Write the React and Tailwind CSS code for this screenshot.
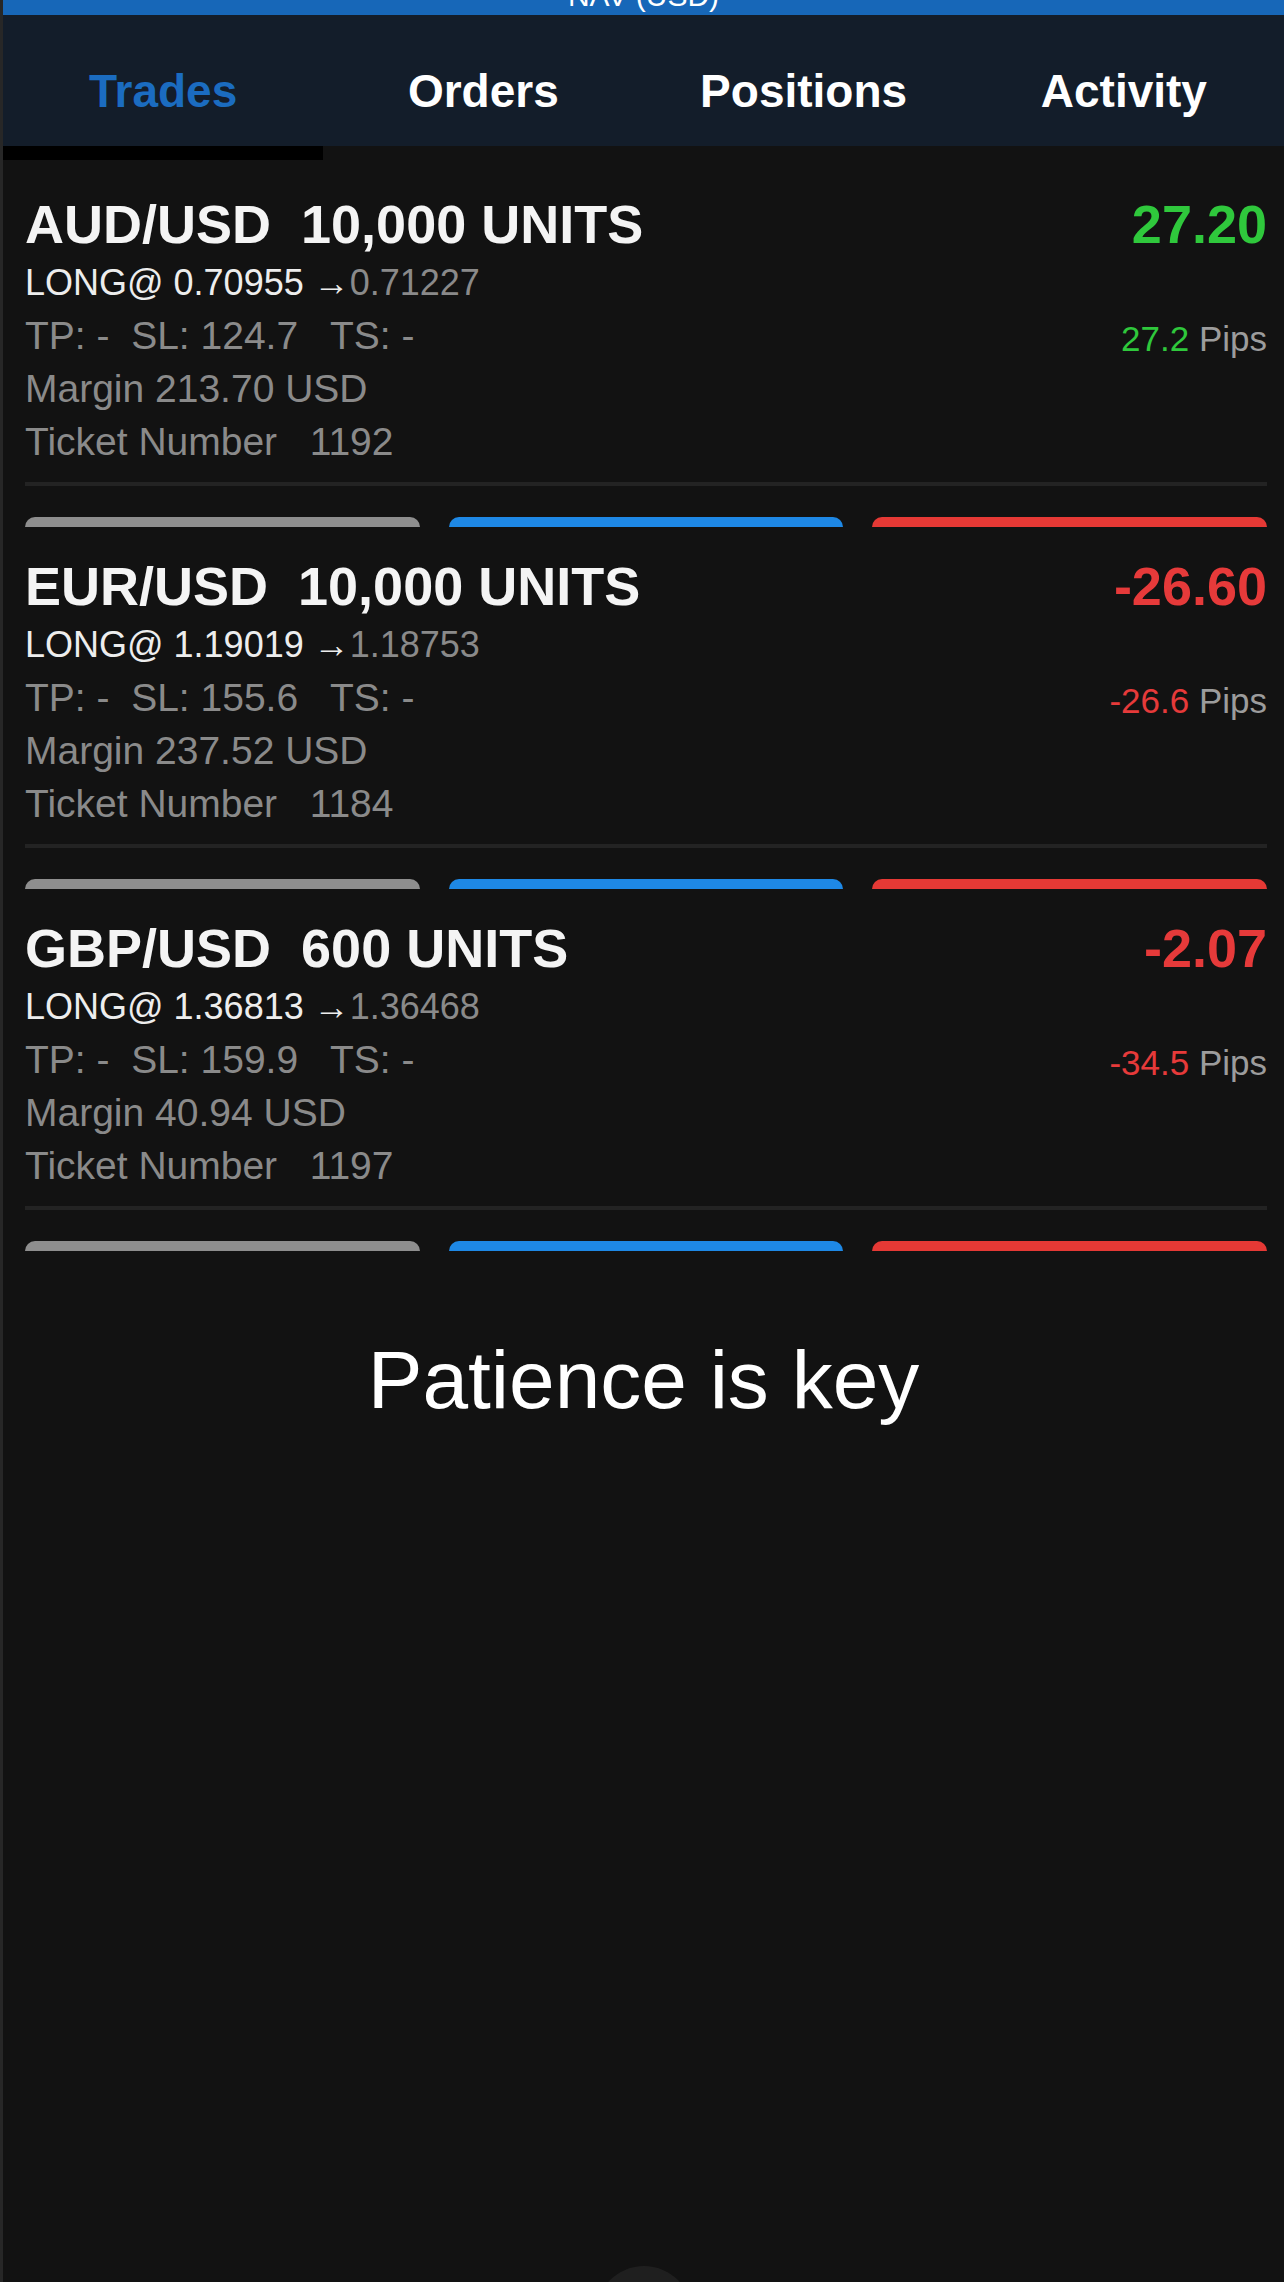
import React from 'react';

const tabs = ['Trades', 'Orders', 'Positions', 'Activity'];

const trades = [
    {
        pair: 'AUD/USD',
        units: '10,000 UNITS',
        open: '0.70955',
        current: '0.71227',
        sl: '124.7',
        margin: '213.70',
        ticket: '1192',
        pl: '27.20',
        pips: '27.2',
        up: true,
    },
    {
        pair: 'EUR/USD',
        units: '10,000 UNITS',
        open: '1.19019',
        current: '1.18753',
        sl: '155.6',
        margin: '237.52',
        ticket: '1184',
        pl: '-26.60',
        pips: '-26.6',
        up: false,
    },
    {
        pair: 'GBP/USD',
        units: '600 UNITS',
        open: '1.36813',
        current: '1.36468',
        sl: '159.9',
        margin: '40.94',
        ticket: '1197',
        pl: '-2.07',
        pips: '-34.5',
        up: false,
    },
];

const TradeCard = ({ t }) => {
    const plColor = t.up ? 'text-[#2fc83c]' : 'text-[#e63a3a]';

    return (
        <div className="pt-[31px] pl-[22px] pr-[17px]">
            {/* ligne titre */}
            <div className="flex justify-between items-center h-[56px] text-[54px] leading-[56px] font-bold">
                <span className="text-[#f4f4f4] whitespace-pre">{t.pair}  {t.units}</span>
                <span className={plColor}>{t.pl}</span>
            </div>

            <div className="mt-[4px] leading-[53px] text-[#8a8a8a]">
                <div className="h-[53px] text-[36px] whitespace-pre">
                    <span className="text-[#ededed]">LONG@ {t.open} →</span>
                    {t.current}
                </div>
                <div className="h-[53px] flex justify-between">
                    <span className="text-[39px] whitespace-pre">TP: -  SL: {t.sl}   TS: -</span>
                    <span className="text-[35px] pt-[3px]">
                        <span className={plColor}>{t.pips}</span>
                        <span className="text-[#9c9c9c]"> Pips</span>
                    </span>
                </div>
                <div className="h-[53px] text-[39px]">Margin {t.margin} USD</div>
                <div className="h-[53px] text-[39px] whitespace-pre">Ticket Number   {t.ticket}</div>
            </div>

            <div className="mt-[14px] h-[4px] bg-[#232323]" />

            {/* boutons (coupés) */}
            <div className="mt-[31px] grid grid-cols-3 gap-[29px]">
                <div className="h-[10px] rounded-t-[10px] bg-[#8e8e8e]" />
                <div className="h-[10px] rounded-t-[10px] bg-[#1e88e5]" />
                <div className="h-[10px] rounded-t-[10px] bg-[#e53935]" />
            </div>
        </div>
    );
};

const App = () => {
    return (
        <div className="h-[2282px] w-[1284px] overflow-hidden bg-[#121212] border-l-[3px] border-[#272727] flex flex-col font-['Liberation_Sans',Arial,sans-serif]">
            {/* barre du haut */}
            <div className="h-[15px] bg-[#1767b8] overflow-hidden">
                <div className="-mt-[19px] text-center text-[30px] leading-[30px] text-white">NAV (USD)</div>
            </div>

            {/* onglets */}
            <div className="h-[131px] pt-[20px] bg-[#131d2a] grid grid-cols-4 items-center text-[46px] leading-[52px] font-bold">
                {tabs.map((tab, i) => (
                    <div key={tab} className={'text-center ' + (i === 0 ? 'text-[#1b6cc0]' : 'text-white')}>
                        {tab}
                    </div>
                ))}
            </div>
            <div className="h-[14px] grid grid-cols-4">
                <div className="bg-black" />
            </div>

            <div className="pt-[5px]">
                {trades.map((t) => (
                    <TradeCard key={t.ticket} t={t} />
                ))}
            </div>

            <div className="mt-[88px] text-center text-[82px] leading-[82px] text-white">
                Patience is key
            </div>

            <div className="mt-auto h-[16px] overflow-hidden flex justify-center">
                <div className="w-[96px] h-[96px] rounded-full bg-[#1f1f1f]" />
            </div>
        </div>
    );
};

export default App;
